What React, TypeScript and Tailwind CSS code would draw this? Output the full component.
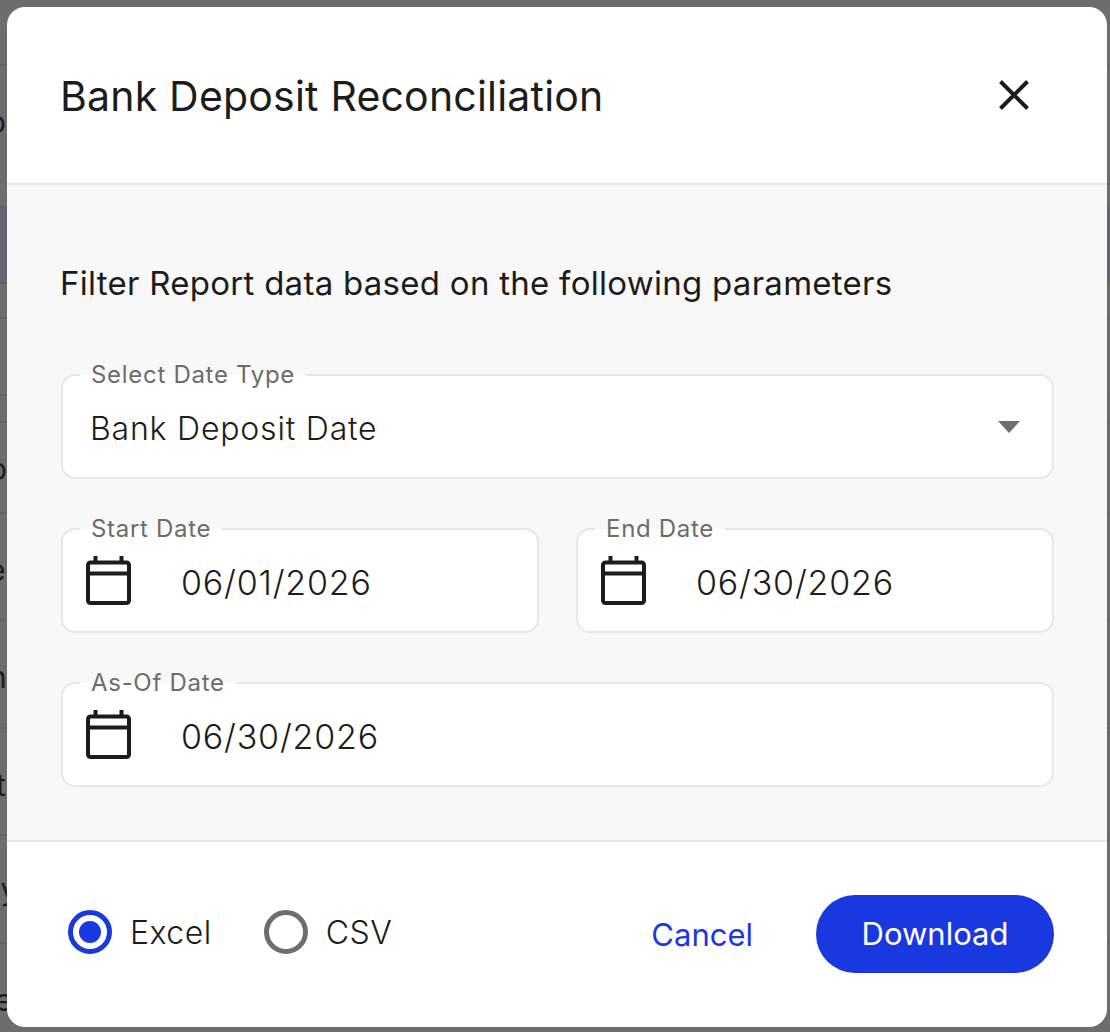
import React from 'react';

const fontStack = { fontFamily: '"Inter", "Liberation Sans", sans-serif' };

// rows of the table that sits dimmed behind the dialog: only their left edge shows
const backdropRows = [
  { height: 66, text: '', offset: 0, className: '' },
  { height: 142, text: 'o', offset: -12, className: 'pb-[28px]' },
  { height: 76, text: '', offset: 0, className: 'bg-[#646570]' },
  { height: 35, text: '', offset: 0, className: '' },
  { height: 77, text: '', offset: 0, className: '' },
  { height: 27, text: '', offset: 0, className: '' },
  { height: 91, text: 'o', offset: -11, className: 'pt-[4px]' },
  { height: 107, text: 'e', offset: -12, className: 'pt-[8px]' },
  { height: 108, text: 'n', offset: -11, className: 'pt-[6px]' },
  { height: 107, text: 't', offset: -4, className: 'pt-[8px]' },
  { height: 108, text: 'ly', offset: -7, className: '' },
  { height: 115, text: 're', offset: -16, className: '' },
];

function CalendarIcon() {
  return (
    <svg width="45" height="49" viewBox="0 0 45 49" fill="none" className="shrink-0">
      <path d="M9.5 0v7M35.5 0v7" stroke="#1c1c1c" strokeWidth="4" />
      <rect x="2" y="6.5" width="41" height="40.5" rx="2.5" stroke="#1c1c1c" strokeWidth="4" />
      <path d="M2 17.5h41" stroke="#1c1c1c" strokeWidth="4" />
    </svg>
  );
}

function Field({ label, children }: { label: string; children: React.ReactNode }) {
  return (
    <div className="relative w-full h-[105px] -mt-px bg-white border-2 border-[#e7e7e7] rounded-[14px] flex items-center">
      <span className="absolute left-[17px] top-[-15px] px-[11px] bg-[linear-gradient(to_bottom,#f8f8f8_50%,#ffffff_50%)] text-[24px] leading-[28px] tracking-[0.7px] text-[#6c6c6c]">
        {label}
      </span>
      {children}
    </div>
  );
}

function DateField({ label, value }: { label: string; value: string }) {
  return (
    <Field label={label}>
      <div className="flex items-center pl-[23px] pb-[1px]">
        <CalendarIcon />
        <span className="ml-[50px] mt-[4px] text-[34px] font-light tracking-[0.8px] text-[#1c1c1c]">{value}</span>
      </div>
    </Field>
  );
}

function Radio({ label, checked }: { label: string; checked?: boolean }) {
  return (
    <label className="flex items-center gap-[18px]">
      <span
        className={
          checked
            ? 'w-[44px] h-[44px] rounded-full border-[5px] border-[#1a38e0] flex items-center justify-center'
            : 'w-[44px] h-[44px] rounded-full border-[5px] border-[#6e6e6e]'
        }
      >
        {checked && <span className="w-[22px] h-[22px] rounded-full bg-[#1a38e0]" />}
      </span>
      <span className="mt-[2px] text-[32px] font-light tracking-[0.5px] text-[#1c1c1c]">{label}</span>
    </label>
  );
}

export default function App() {
  return (
    <div className="relative h-[1032px] w-[1110px] overflow-hidden bg-[#6d6d6d]" style={fontStack}>
      <div className="flex flex-col">
        {backdropRows.map((row, i) => (
          <div
            key={i}
            style={{ height: row.height }}
            className={'flex items-center border-b-2 border-[#626262] ' + row.className}
          >
            {row.text && (
              <span className="text-[30px] text-[#1c1c1c]" style={{ marginLeft: row.offset }}>
                {row.text}
              </span>
            )}
          </div>
        ))}
      </div>

      <div className="absolute left-[7px] top-[7px] w-[1100px] h-[1020px] bg-white rounded-[18px] overflow-hidden flex flex-col">
        <div className="h-[178px] shrink-0 border-b-2 border-[#e6e6e6] flex items-center justify-between pl-[53px] pr-[77px]">
          <h2 className="mt-[3px] text-[41px] text-[#1c1c1c] tracking-[0.2px]">Bank Deposit Reconciliation</h2>
          <svg width="32" height="32" viewBox="0 0 32 32" fill="none">
            <path d="M2.5 2.5l27 27M29.5 2.5l-27 27" stroke="#1c1c1c" strokeWidth="4" />
          </svg>
        </div>

        <div className="flex-1 bg-[#f8f8f8] pt-[78px] pl-[54px] pr-[53px]">
          <p className="text-[33px] leading-[40px] tracking-[0.27px] text-[#1c1c1c] -ml-[1px]">Filter Report data based on the following parameters</p>
          <div className="mt-[72px] flex flex-col gap-[50px]">
            <Field label="Select Date Type">
              <span className="pl-[27px] mt-[4px] text-[32px] font-light tracking-[0.8px] text-[#1c1c1c] flex-1">Bank Deposit Date</span>
              <svg width="22" height="12" viewBox="0 0 22 12" className="mr-[32px]">
                <path d="M0 0h22L11 12z" fill="#6e6e6e" />
              </svg>
            </Field>
            <div className="flex gap-[37px]">
              <DateField label="Start Date" value="06/01/2026" />
              <DateField label="End Date" value="06/30/2026" />
            </div>
            <DateField label="As-Of Date" value="06/30/2026" />
          </div>
        </div>

        <div className="h-[187px] shrink-0 border-t-2 border-[#e6e6e6] flex items-center pl-[61px] pr-[53px] pb-[1px]">
          <div className="mb-[4px] flex items-center gap-[52px]">
            <Radio label="Excel" checked />
            <Radio label="CSV" />
          </div>
          <button className="ml-auto mt-[2px] text-[31px] text-[#1a38e0]">Cancel</button>
          <button className="ml-[63px] w-[238px] h-[78px] rounded-full bg-[#1a38e0] text-white text-[31px]">Download</button>
        </div>
      </div>
    </div>
  );
}
